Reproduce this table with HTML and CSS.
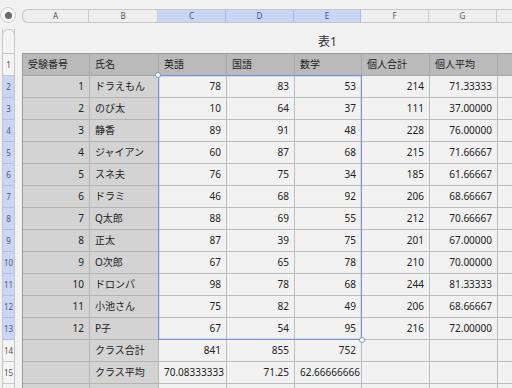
FILE: index.html
```html
<!DOCTYPE html>
<html lang="ja">
<head>
<meta charset="utf-8">
<title>表1</title>
<link rel="stylesheet" href="styles.css">
</head>
<body>
<div class="top">
  <div class="corner"><span class="knob"><span class="dot"></span></span></div>
  <div class="colbar">
    <div class="ch w67">A</div><div class="ch w69">B</div><div class="ch w68 sel">C</div><div class="ch w68 sel">D</div><div class="ch w67 sel">E</div><div class="ch w68">F</div><div class="ch w68">G</div><div class="ch w68"></div><div class="ch w68"></div>
  </div>
</div>
<div class="main">
  <div class="rowbar">
    <div class="cap"></div>
    <div class="rh">1</div>
    <div class="rh on">2</div><div class="rh on">3</div><div class="rh on">4</div><div class="rh on">5</div>
    <div class="rh on">6</div><div class="rh on">7</div><div class="rh on">8</div><div class="rh on">9</div>
    <div class="rh on">10</div><div class="rh on">11</div><div class="rh on">12</div><div class="rh on">13</div>
    <div class="rh">14</div><div class="rh">15</div><div class="rh"></div>
  </div>
  <div class="sheet">
    <div class="title">表1</div>
    <div class="grid">
      <div class="c hd">受験番号</div><div class="c hd">氏名</div><div class="c hd">英語</div><div class="c hd">国語</div><div class="c hd">数学</div><div class="c hd">個人合計</div><div class="c hd">個人平均</div><div class="c hd"></div><div class="c hd"></div>

      <div class="c gr n">1</div><div class="c gr">ドラえもん</div><div class="c n">78</div><div class="c n">83</div><div class="c n">53</div><div class="c n">214</div><div class="c n">71.33333</div><div class="c"></div><div class="c"></div>
      <div class="c gr n">2</div><div class="c gr">のび太</div><div class="c n">10</div><div class="c n">64</div><div class="c n">37</div><div class="c n">111</div><div class="c n">37.00000</div><div class="c"></div><div class="c"></div>
      <div class="c gr n">3</div><div class="c gr">静香</div><div class="c n">89</div><div class="c n">91</div><div class="c n">48</div><div class="c n">228</div><div class="c n">76.00000</div><div class="c"></div><div class="c"></div>
      <div class="c gr n">4</div><div class="c gr">ジャイアン</div><div class="c n">60</div><div class="c n">87</div><div class="c n">68</div><div class="c n">215</div><div class="c n">71.66667</div><div class="c"></div><div class="c"></div>
      <div class="c gr n">5</div><div class="c gr">スネ夫</div><div class="c n">76</div><div class="c n">75</div><div class="c n">34</div><div class="c n">185</div><div class="c n">61.66667</div><div class="c"></div><div class="c"></div>
      <div class="c gr n">6</div><div class="c gr">ドラミ</div><div class="c n">46</div><div class="c n">68</div><div class="c n">92</div><div class="c n">206</div><div class="c n">68.66667</div><div class="c"></div><div class="c"></div>
      <div class="c gr n">7</div><div class="c gr">Q太郎</div><div class="c n">88</div><div class="c n">69</div><div class="c n">55</div><div class="c n">212</div><div class="c n">70.66667</div><div class="c"></div><div class="c"></div>
      <div class="c gr n">8</div><div class="c gr">正太</div><div class="c n">87</div><div class="c n">39</div><div class="c n">75</div><div class="c n">201</div><div class="c n">67.00000</div><div class="c"></div><div class="c"></div>
      <div class="c gr n">9</div><div class="c gr">O次郎</div><div class="c n">67</div><div class="c n">65</div><div class="c n">78</div><div class="c n">210</div><div class="c n">70.00000</div><div class="c"></div><div class="c"></div>
      <div class="c gr n">10</div><div class="c gr">ドロンパ</div><div class="c n">98</div><div class="c n">78</div><div class="c n">68</div><div class="c n">244</div><div class="c n">81.33333</div><div class="c"></div><div class="c"></div>
      <div class="c gr n">11</div><div class="c gr">小池さん</div><div class="c n">75</div><div class="c n">82</div><div class="c n">49</div><div class="c n">206</div><div class="c n">68.66667</div><div class="c"></div><div class="c"></div>
      <div class="c gr n">12</div><div class="c gr">P子</div><div class="c n">67</div><div class="c n">54</div><div class="c n">95</div><div class="c n">216</div><div class="c n">72.00000</div><div class="c"></div><div class="c"></div>

      <div class="c gr"></div><div class="c gr">クラス合計</div><div class="c n">841</div><div class="c n">855</div><div class="c n">752</div><div class="c"></div><div class="c"></div><div class="c"></div><div class="c"></div>
      <div class="c gr"></div><div class="c gr">クラス平均</div><div class="c clip">70.08333333</div><div class="c n">71.25</div><div class="c clip">62.66666666</div><div class="c"></div><div class="c"></div><div class="c"></div><div class="c"></div>
      <div class="c gr"></div><div class="c gr"></div><div class="c"></div><div class="c"></div><div class="c"></div><div class="c"></div><div class="c"></div><div class="c"></div><div class="c"></div>

      <div class="selection"><span class="handle tl"></span><span class="handle br"></span></div>
    </div>
  </div>
</div>
</body>
</html>
```
FILE: styles.css
```css
* { box-sizing: border-box; }
html, body {
  margin: 0;
  width: 512px;
  height: 388px;
  overflow: hidden;
  background: #f2f2f2;
  font-family: "Noto Sans", "Noto Sans CJK JP", sans-serif;
  color: #222;
}

.top {
  display: flex;
  height: 29px;
}
.corner {
  width: 22px;
  flex: none;
}
.knob {
  display: flex;
  align-items: center;
  justify-content: center;
  width: 16px;
  height: 16px;
  margin: 7px 0 0 0;
  border-radius: 50%;
  border: 1px solid #cdcdcd;
  background: #f8f8f8;
}
.dot {
  width: 7px;
  height: 7px;
  border-radius: 50%;
  background: #6a6a6a;
}

.colbar {
  display: flex;
  flex: none;
  margin-top: 9px;
  height: 14px;
  border: 1px solid #c6c6c6;
  border-right: none;
  border-radius: 6px 0 0 6px;
  overflow: hidden;
  background: #eeeeee;
}
.ch {
  flex: none;
  height: 100%;
  border-right: 1px solid #cbcbcb;
  font-size: 8px;
  line-height: 12px;
  text-align: center;
  color: #555;
}
.ch.sel {
  background: #c8d5f3;
  border-right-color: #a9bbe6;
  color: #3d5089;
}
.w67 { width: 67px; }
.w68 { width: 68px; }
.w69 { width: 69px; }
.colbar .w67:first-child { width: 66px; }

.main {
  display: flex;
}
.rowbar {
  flex: none;
  width: 13px;
  margin: 0 7px 0 2px;
  border-left: 1px solid #c6c6c6;
  border-right: 1px solid #c6c6c6;
}
.cap {
  height: 25px;
  border-top: 1px solid #c6c6c6;
  border-bottom: 1px solid #c6c6c6;
  border-radius: 6px 6px 0 0;
  margin: 0 -1px;
  border-left: 1px solid #c6c6c6;
  border-right: 1px solid #c6c6c6;
  background: #f4f4f4;
}
.rh {
  height: 22px;
  border-bottom: 1px solid #c9c9c9;
  font-size: 8px;
  line-height: 21px;
  text-align: center;
  color: #555;
  background: #f4f4f4;
}
.rh.on {
  background: #c9d6f4;
  border-bottom-color: #aebfe6;
  color: #45588f;
}

.sheet {
  flex: none;
}
.title {
  width: 611px;
  height: 24px;
  text-align: center;
  font-size: 12px;
  line-height: 26px;
  color: #333;
}
.grid {
  position: relative;
  display: grid;
  grid-template-columns: 67px 69px 68px 68px 67px 68px 68px 68px 68px;
  grid-auto-rows: 22px;
  width: max-content;
  border-left: 1px solid #9c9c9c;
  border-top: 1px solid #9c9c9c;
}
.c {
  border-right: 1px solid #bdbdbd;
  border-bottom: 1px solid #bdbdbd;
  padding: 0 5px;
  font-size: 10px;
  line-height: 21px;
  white-space: nowrap;
  overflow: hidden;
  background: #f2f2f2;
  color: #222;
}
.c.hd { background: #bababa; border-color: #a8a8a8; }
.c.gr { background: #d3d3d3; border-color: #b3b3b3; }
.c.n { text-align: right; }
.c.clip { padding-right: 0; text-overflow: clip; }

.selection {
  position: absolute;
  left: 135px;
  top: 21px;
  width: 204px;
  height: 265px;
  border: 1px solid #7b94d8;
  box-shadow: inset 0 0 0 0.5px rgba(123, 148, 216, 0.5);
  pointer-events: none;
}
.handle {
  position: absolute;
  width: 6px;
  height: 6px;
  border-radius: 50%;
  border: 1px solid #7b94d8;
  background: #fff;
}
.handle.tl { left: -4px; top: -4px; }
.handle.br { right: -4px; bottom: -4px; }
```
